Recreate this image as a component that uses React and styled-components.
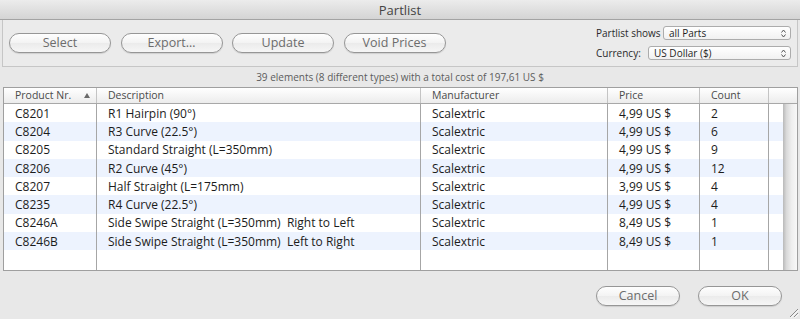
import React from "react";
import styled, { createGlobalStyle } from "styled-components";

const GlobalStyle = createGlobalStyle`
  html, body { margin: 0; padding: 0; background: #e8e8e8; }
  body { font-family: "Open Sans", "Noto Sans", sans-serif; }
  * { box-sizing: border-box; }
`;

const Window = styled.div`
  position: relative;
  width: 800px;
  height: 319px;
  display: flex;
  flex-direction: column;
  background: #e8e8e8;
  overflow: hidden;
`;

const TitleBar = styled.div`
  height: 20px;
  flex: none;
  display: flex;
  align-items: center;
  justify-content: center;
  background: linear-gradient(#ececec, #d4d4d4);
  border-bottom: 1px solid #a3a3a3;
  font-size: 13px;
  color: #444444;
`;

const TopPanel = styled.div`
  flex: none;
  height: 47px;
  margin: 0 2px;
  display: flex;
  align-items: center;
  justify-content: space-between;
  padding: 0 6px 0 6px;
  background: #ebebeb;
  border: 1px solid #c6c6c6;
  border-top: none;
`;

const ButtonGroup = styled.div`
  display: flex;
  gap: ${(p) => p.$gap}px;
`;

const PillButton = styled.button`
  width: ${(p) => p.$w}px;
  height: 20px;
  padding: 0;
  border: 1px solid #969696;
  border-radius: 10px;
  background: linear-gradient(#fefefe, #f3f3f3 50%, #ebebeb 51%, #f6f6f6);
  box-shadow: 0 1px 1px rgba(0, 0, 0, 0.12);
  font-family: "Open Sans", "Noto Sans", sans-serif;
  font-size: 12.5px;
  font-weight: 500;
  color: #6c6c6c;
  line-height: 18px;
`;

const Options = styled.div`
  width: 195px;
  display: flex;
  flex-direction: column;
  gap: 6px;
`;

const OptionRow = styled.div`
  display: flex;
  align-items: center;
  justify-content: space-between;
  font-size: 10px;
  color: #2a2a2a;
`;

const PopUp = styled.div`
  width: ${(p) => p.$w}px;
  height: 14px;
  display: flex;
  align-items: center;
  justify-content: space-between;
  padding: 0 4px 0 5px;
  border: 1px solid #acacac;
  border-radius: 3px;
  background: linear-gradient(#ffffff, #f1f1f1);
  font-size: 10px;
  color: #1e1e1e;
`;

const Status = styled.div`
  flex: none;
  height: 20px;
  display: flex;
  align-items: center;
  justify-content: center;
  font-size: 10px;
  color: #5c5c5c;
`;

const TableFrame = styled.div`
  flex: none;
  height: 184px;
  margin: 0 2px 0 3px;
  display: flex;
  flex-direction: column;
  border: 1px solid #9f9f9f;
  background: #fff;
`;

const COLS = "93px 324px 187px 92px 69px 1fr";

const HeaderRow = styled.div`
  flex: none;
  height: 16px;
  display: grid;
  grid-template-columns: ${COLS};
  background: linear-gradient(#ffffff, #ececec);
  border-bottom: 1px solid #a8a8a8;
`;

const HeadCell = styled.div`
  display: flex;
  align-items: center;
  justify-content: space-between;
  padding: 0 6px 0 11px;
  border-right: ${(p) => (p.$last ? "none" : "1px solid #c4c4c4")};
  font-size: 10.5px;
  color: #4a4a4a;
  line-height: 15px;
`;

const BodyArea = styled.div`
  flex: 1;
  display: flex;
  min-height: 0;
`;

const Rows = styled.div`
  flex: 1;
  display: flex;
  flex-direction: column;
`;

const Row = styled.div`
  flex: none;
  height: 18.3px;
  display: grid;
  grid-template-columns: ${COLS};
  background: ${(p) => (p.$alt ? "#edf3fe" : "#ffffff")};
`;

const FillerRow = styled.div`
  flex: 1;
  display: grid;
  grid-template-columns: ${COLS};
  background: #fff;
`;

const Cell = styled.div`
  display: flex;
  align-items: center;
  padding-left: 11px;
  border-right: ${(p) => (p.$last ? "none" : "1px solid #a6a6a6")};
  font-size: 12px;
  color: #1c1c1c;
  white-space: pre;
  overflow: hidden;
`;

const ScrollTrack = styled.div`
  flex: none;
  width: 14px;
  background: linear-gradient(to right, #b9b9b9, #d9d9d9 25%, #eeeeee 60%, #f8f8f8);
`;

const Footer = styled.div`
  flex: 1;
  display: flex;
  justify-content: flex-end;
  align-items: flex-start;
  padding: 15px 18px 0 0;
`;

const Grip = styled.svg`
  position: absolute;
  right: 1px;
  bottom: 1px;
`;

const SortArrow = () => (
  <svg width="6" height="5" viewBox="0 0 6 5">
    <path d="M3 0 L6 5 L0 5 Z" fill="#6a6a6a" />
  </svg>
);

const UpDown = () => (
  <svg width="5" height="9" viewBox="0 0 5 9">
    <path d="M0.5 3.5 L2.5 1 L4.5 3.5 M0.5 5.5 L2.5 8 L4.5 5.5" fill="none" stroke="#555" strokeWidth="1" />
  </svg>
);

const parts = [
  ["C8201", "R1 Hairpin (90°)", "Scalextric", "4,99 US $", "2"],
  ["C8204", "R3 Curve (22.5°)", "Scalextric", "4,99 US $", "6"],
  ["C8205", "Standard Straight (L=350mm)", "Scalextric", "4,99 US $", "9"],
  ["C8206", "R2 Curve (45°)", "Scalextric", "4,99 US $", "12"],
  ["C8207", "Half Straight (L=175mm)", "Scalextric", "3,99 US $", "4"],
  ["C8235", "R4 Curve (22.5°)", "Scalextric", "4,99 US $", "4"],
  ["C8246A", "Side Swipe Straight (L=350mm)  Right to Left", "Scalextric", "8,49 US $", "1"],
  ["C8246B", "Side Swipe Straight (L=350mm)  Left to Right", "Scalextric", "8,49 US $", "1"],
];

export default function App() {
  return (
    <>
      <GlobalStyle />
      <Window>
        <TitleBar>Partlist</TitleBar>
        <TopPanel>
          <ButtonGroup $gap={9.5}>
            <PillButton $w={102}>Select</PillButton>
            <PillButton $w={102}>Export…</PillButton>
            <PillButton $w={102}>Update</PillButton>
            <PillButton $w={102}>Void Prices</PillButton>
          </ButtonGroup>
          <Options>
            <OptionRow>
              <span>Partlist shows</span>
              <PopUp $w={128}>
                <span>all Parts</span>
                <UpDown />
              </PopUp>
            </OptionRow>
            <OptionRow>
              <span>Currency:</span>
              <PopUp $w={143}>
                <span>US Dollar ($)</span>
                <UpDown />
              </PopUp>
            </OptionRow>
          </Options>
        </TopPanel>
        <Status>39 elements (8 different types) with a total cost of 197,61 US $</Status>
        <TableFrame>
          <HeaderRow>
            <HeadCell>
              <span>Product Nr.</span>
              <SortArrow />
            </HeadCell>
            <HeadCell>Description</HeadCell>
            <HeadCell>Manufacturer</HeadCell>
            <HeadCell>Price</HeadCell>
            <HeadCell>Count</HeadCell>
            <HeadCell $last />
          </HeaderRow>
          <BodyArea>
            <Rows>
              {parts.map((p, i) => (
                <Row key={p[0]} $alt={i % 2 === 1}>
                  {p.map((v, j) => (
                    <Cell key={j}>{v}</Cell>
                  ))}
                  <Cell $last />
                </Row>
              ))}
              <FillerRow>
                <Cell />
                <Cell />
                <Cell />
                <Cell />
                <Cell />
                <Cell $last />
              </FillerRow>
            </Rows>
            <ScrollTrack />
          </BodyArea>
        </TableFrame>
        <Footer>
          <ButtonGroup $gap={18}>
            <PillButton $w={84}>Cancel</PillButton>
            <PillButton $w={84}>OK</PillButton>
          </ButtonGroup>
        </Footer>
        <Grip width="12" height="12" viewBox="0 0 12 12">
          <path d="M11 3 L3 11 M11 7 L7 11" stroke="#8a8a8a" strokeWidth="1" />
          <path d="M11.8 3.8 L3.8 11.8 M11.8 7.8 L7.8 11.8" stroke="#ffffff" strokeWidth="1" />
        </Grip>
      </Window>
    </>
  );
}
